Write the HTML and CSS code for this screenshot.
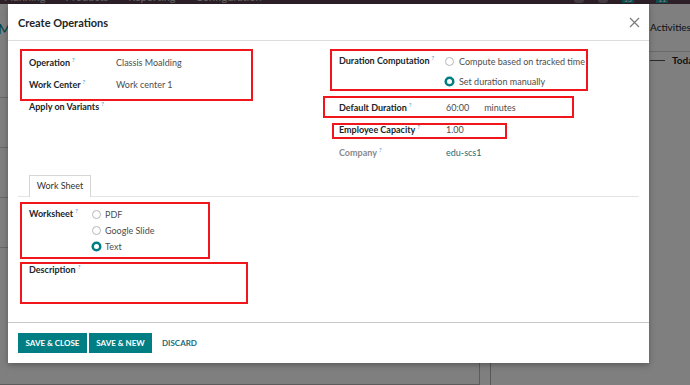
FILE: index.html
```html
<!DOCTYPE html>
<html lang="en">
<head>
<meta charset="utf-8">
<title>Create Operations</title>
<link rel="stylesheet" href="styles.css">
</head>
<body>
<div class="app">
  <nav class="navbar">
    <span>Planning</span><span>Products</span><span>Reporting</span><span>Configuration</span>
    <span class="nav-fill"></span>
    <span class="nav-icon"></span><span class="nav-icon"></span><span class="nav-badge">13</span><span class="nav-badge">11</span>
  </nav>
  <div class="main">
    <div class="form-view">
      <div class="breadcrumb">Manufacturing Orders</div>
      <div class="sheet">
        <div class="sheet-row"></div>
        <div class="sheet-row"></div>
        <div class="sheet-row"></div>
        <div class="sheet-row"></div>
      </div>
    </div>
    <aside class="chatter">
      <div class="chatter-top">Activities</div>
      <div class="today"><span class="today-line"></span><b>Today</b></div>
    </aside>
  </div>
</div>
<div class="backdrop"></div>

<div class="modal">
  <div class="modal-header">
    <h4 class="modal-title">Create Operations</h4>
    <button class="close" aria-label="Close">
      <svg width="11" height="11" viewBox="0 0 11 11"><path d="M1 1L10 10M10 1L1 10" stroke="#7a7a7a" stroke-width="1.2" fill="none"/></svg>
    </button>
  </div>
  <div class="modal-body">
    <div class="group">
      <div class="col col-left">
        <div class="row"><span class="label">Operation<sup>?</sup></span><span class="val">Classis Moalding</span></div>
        <div class="row"><span class="label">Work Center<sup>?</sup></span><span class="val">Work center 1</span></div>
        <div class="row"><span class="label">Apply on Variants<sup>?</sup></span><span class="val"></span></div>
      </div>
      <div class="col col-right">
        <div class="row row-radios">
          <span class="label">Duration Computation<sup>?</sup></span>
          <div class="radios">
            <div class="radio"><span class="dot"></span>Compute based on tracked time</div>
            <div class="radio"><span class="dot on"></span>Set duration manually</div>
          </div>
        </div>
        <div class="row row-gap"><span class="label">Default Duration<sup>?</sup></span><span class="val">60:00<span class="unit">minutes</span></span></div>
        <div class="row row-r"><span class="label">Employee Capacity<sup>?</sup></span><span class="val">1.00</span></div>
        <div class="row row-r"><span class="label muted">Company<sup>?</sup></span><span class="val link">edu-scs1</span></div>
      </div>
    </div>
    <div class="tabs"><div class="tab">Work Sheet</div></div>
    <div class="tab-pane">
      <div class="row row-ws">
        <span class="label ws-label">Worksheet<sup>?</sup></span>
        <div class="radios ws-radios">
          <div class="radio"><span class="dot"></span>PDF</div>
          <div class="radio"><span class="dot"></span>Google Slide</div>
          <div class="radio"><span class="dot on"></span>Text</div>
        </div>
      </div>
      <div class="row row-desc"><span class="label">Description<sup>?</sup></span></div>
    </div>
  </div>
  <div class="modal-footer">
    <button class="btn btn-primary">Save &amp; Close</button>
    <button class="btn btn-primary">Save &amp; New</button>
    <button class="btn btn-link">Discard</button>
  </div>

  <div class="mark mark-op"></div>
  <div class="mark mark-dur"></div>
  <div class="mark mark-def"></div>
  <div class="mark mark-emp"></div>
  <div class="mark mark-ws"></div>
  <div class="mark mark-desc"></div>
</div>
</body>
</html>
```

FILE: styles.css
```css
* { box-sizing: border-box; }
html, body { margin: 0; padding: 0; }
body {
  width: 690px;
  height: 385px;
  overflow: hidden;
  font-family: Lato, "Open Sans", sans-serif;
  font-size: 9px;
  color: #212529;
  background: #fff;
  position: relative;
}

/* ---------- background application ---------- */
.app { width: 690px; height: 385px; display: flex; flex-direction: column; }
.navbar {
  height: 10px;
  background: #5a4152;
  display: flex;
  align-items: flex-end;
  overflow: hidden;
  color: #c8c8c8;
  font-size: 11px;
  line-height: 12px;
  padding-left: 4px;
}
.navbar span { margin-right: 20px; margin-bottom: 1px; }
.navbar .nav-fill { flex: 1; margin: 0; }
.nav-icon { width: 10px; height: 8px; background: #8a7a86; border-radius: 3px; margin-right: 14px !important; }
.nav-badge { background: #1a9a9f; color: #fff; font-size: 7px; line-height: 8px; padding: 0 2px; margin-right: 22px !important; }
.main { flex: 1; display: grid; grid-template-columns: 490px 1fr; }
.form-view { padding-top: 16px; }
.breadcrumb { color: #017e84; font-size: 14px; line-height: 18px; margin-left: -2px; }
.sheet {
  margin-top: 10px;
  margin-right: 10px;
  height: 337px;
  border-right: 1px solid #b9b9b9;
  border-bottom: 1px solid #b9b9b9;
}
.sheet-row { height: 50px; border-bottom: 1px solid #d0d0d0; }
.chatter { border-left: 1px solid #b0b0b0; padding-left: 159px; }
.chatter-top { font-size: 10px; line-height: 14px; padding-top: 16px; color: #222; height: 48px; border-bottom: 1px solid #d5d5d5; margin-left: -159px; padding-left: 159px; }
.today { display: flex; align-items: center; gap: 7px; margin-top: 2px; font-size: 10px; line-height: 12px; }
.today-line { width: 15px; border-top: 1px solid #555; }
.backdrop { position: absolute; inset: 0; background: rgba(0, 0, 0, 0.5); }

/* ---------- modal ---------- */
.modal {
  position: absolute;
  left: 8px;
  top: 4px;
  width: 641px;
  height: 359px;
  background: #fff;
  display: flex;
  flex-direction: column;
  box-shadow: 0 2px 6px rgba(0, 0, 0, 0.3);
}
.modal-header {
  height: 37px;
  border-bottom: 1px solid #dcdcdc;
  display: flex;
  align-items: center;
  justify-content: space-between;
  padding: 0 9px 0 10px;
}
.modal-title { margin: 0; font-size: 11px; font-weight: 700; color: #212529; padding-top: 1px; }
.close { border: 0; background: none; padding: 0; display: flex; }

.modal-body { flex: 1; padding: 10px 10px 0 10px; }
.group { display: grid; grid-template-columns: 310px 1fr; padding-left: 11px; }
.row { display: flex; align-items: center; height: 22px; }
.label { font-weight: 700; color: #212529; white-space: nowrap; }
.label.muted { color: #8a8a8a; }
sup { font-size: 6px; color: #3c8fc0; font-weight: 400; margin-left: 2px; vertical-align: 4px; line-height: 0; }
.val { color: #4d4d4d; }
.val.link { color: #1b6c77; }
.unit { margin-left: 15px; }
.col-left .label { width: 87px; }
.col-right .label { width: 107px; }
.row-radios { height: 40px; align-items: flex-start; }
.row-radios .label { line-height: 20px; }
.radios { display: flex; flex-direction: column; }
.radio { display: flex; align-items: center; height: 20px; color: #4d4d4d; }
.col-right .radios { margin-left: -1px; }
.dot {
  width: 9px; height: 9px; border-radius: 50%;
  border: 1px solid #b8b8b8; background: #fff;
  margin-right: 5px; flex: none;
}
.dot.on { border: 2.5px solid #017e84; background: #fff; box-shadow: 0 0 0 0.5px #017e84; }
.row-gap { margin-top: 5px; }
.row-r { height: 23px; }

.tabs { margin-top: 11px; border-bottom: 1px solid #e4e4e4; padding-left: 11px; display: flex; }
.tab {
  height: 22px;
  width: 62px;
  text-align: center;
  line-height: 20px;
  border: 1px solid #d6d6d6;
  border-bottom: 0;
  margin-bottom: -1px;
  background: #fff;
  color: #333;
}
.tab-pane { padding: 9px 0 0 11px; }
.row-ws { height: 48px; align-items: flex-start; }
.ws-label { width: 63px; line-height: 16px; }
.ws-radios .radio { height: 16px; }
.ws-radios .dot { margin-right: 4px; }
.row-desc { margin-top: 8px; height: 14px; }

.modal-footer {
  border-top: 1px solid #c7c7cc;
  padding: 10px 10px;
  display: flex;
  gap: 2px;
}
.btn {
  height: 20px;
  border: 0;
  font-family: Lato, sans-serif;
  font-size: 8px;
  font-weight: 700;
  text-transform: uppercase;
  padding: 0 7px;
  cursor: pointer;
}
.btn-primary { background: #017e84; color: #fff; }
.btn-primary:first-child { width: 69px; }
.btn-primary:nth-child(2) { width: 63px; }
.btn-link { background: none; color: #1b6c77; padding-left: 8px; }

/* ---------- red annotation boxes ---------- */
.mark { position: absolute; border: 2px solid #f0161b; pointer-events: none; }
.mark-op { left: 12px; top: 45px; width: 233px; height: 52px; }
.mark-dur { left: 322px; top: 45px; width: 258px; height: 42px; }
.mark-def { left: 315px; top: 92px; width: 251px; height: 22px; }
.mark-emp { left: 324px; top: 119px; width: 175px; height: 16px; }
.mark-ws { left: 12px; top: 198px; width: 190px; height: 57px; }
.mark-desc { left: 12px; top: 258px; width: 228px; height: 42px; }
```
